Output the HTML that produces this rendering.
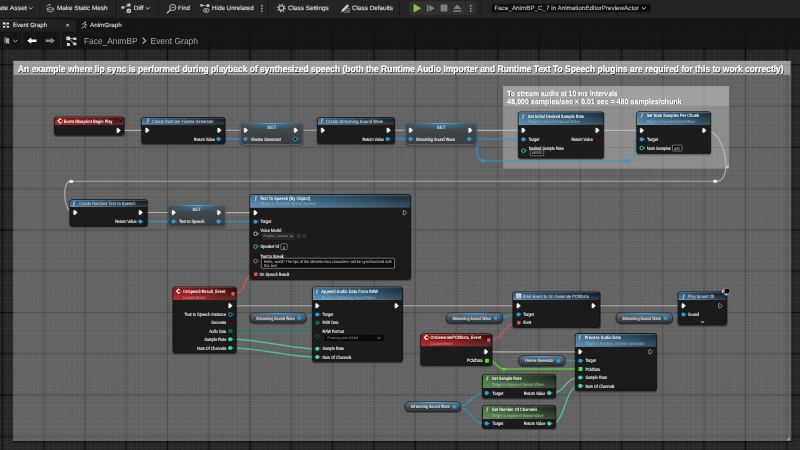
<!DOCTYPE html>
<html lang="en"><head><meta charset="utf-8"><title>Face_AnimBP - Event Graph</title>
<style>
html,body{margin:0;padding:0;background:#262626;overflow:hidden}
body{width:800px;height:450px;position:relative;font-family:"Liberation Sans",sans-serif}
svg{position:absolute;left:0;top:0;display:block;will-change:transform}
text{font-family:"Liberation Sans",sans-serif;white-space:pre}
.lb{stroke:#f2f2f2;stroke-width:0.12px}
#toolbar text,#tabs text{stroke:#d2d2d2;stroke-width:0.18px}
#toolbar text.dd{stroke-width:0.08px}
#comments text[fill="#fff"]{stroke:#fff;stroke-width:0.22px}
</style></head><body>
<svg width="800" height="450" viewBox="0 0 800 450" text-rendering="geometricPrecision">
<defs>
<pattern id="minor" x="1.9" y="23.6" width="5.16" height="5.16" patternUnits="userSpaceOnUse">
<path d="M0.5,0 V5.2 M0,0.5 H5.2" stroke="#303030" stroke-width="1" fill="none"/></pattern>
<pattern id="half" x="4.48" y="26.18" width="5.16" height="5.16" patternUnits="userSpaceOnUse">
<path d="M0.5,0 V5.2 M0,0.5 H5.2" stroke="#292929" stroke-width="1" fill="none"/></pattern>
<pattern id="major" x="1.9" y="64.4" width="165.12" height="165.12" patternUnits="userSpaceOnUse">
<path d="M0.5,0 V165.2 M41.78,0 V165.2 M124.34,0 V165.2 M0,41.78 H165.2 M0,83.06 H165.2 M0,124.34 H165.2" stroke="#0a0a0a" stroke-width="1.1" fill="none" opacity="0.95"/>
<path d="M83.06,0 V165.2 M0,0.5 H165.2" stroke="#080808" stroke-width="1.15" fill="none"/></pattern>
<linearGradient id="gblue" x1="0" x2="1" y1="0" y2="0"><stop offset="0" stop-color="#4d7fa2"/><stop offset="0.55" stop-color="#325a76"/><stop offset="1" stop-color="#1e3646"/></linearGradient>
<linearGradient id="gslate" x1="0" x2="1" y1="0" y2="0"><stop offset="0" stop-color="#3f6a8e"/><stop offset="0.5" stop-color="#2a4359"/><stop offset="1" stop-color="#171d24"/></linearGradient>
<linearGradient id="ghl" x1="0" x2="1" y1="0" y2="0"><stop offset="0" stop-color="#9cc8ee" stop-opacity="0.55"/><stop offset="0.6" stop-color="#9cc8ee" stop-opacity="0.25"/><stop offset="1" stop-color="#9cc8ee" stop-opacity="0"/></linearGradient>
<linearGradient id="gtab" x1="0" x2="1" y1="0" y2="0"><stop offset="0" stop-color="#1d4d80" stop-opacity="0.75"/><stop offset="0.5" stop-color="#1d4d80" stop-opacity="0.4"/><stop offset="1" stop-color="#1d4d80" stop-opacity="0"/></linearGradient>
<linearGradient id="gred" x1="0" x2="1" y1="0" y2="0"><stop offset="0" stop-color="#a4161a"/><stop offset="0.55" stop-color="#801416"/><stop offset="1" stop-color="#3e1010"/></linearGradient>
<linearGradient id="ggreen" x1="0" x2="1" y1="0" y2="0"><stop offset="0" stop-color="#4d7846"/><stop offset="0.55" stop-color="#375232"/><stop offset="1" stop-color="#212d1f"/></linearGradient>
<linearGradient id="gloss" x1="0" x2="0" y1="0" y2="1"><stop offset="0" stop-color="#000" stop-opacity="0.12"/><stop offset="0.3" stop-color="#000" stop-opacity="0.06"/><stop offset="0.7" stop-color="#fff" stop-opacity="0.07"/><stop offset="1" stop-color="#fff" stop-opacity="0.12"/></linearGradient>
<linearGradient id="gset" x1="0" x2="0" y1="0" y2="1"><stop offset="0" stop-color="#454c53"/><stop offset="0.5" stop-color="#3f4347"/><stop offset="1" stop-color="#393c3f"/></linearGradient>
<linearGradient id="gpill" x1="0" x2="0" y1="0" y2="1"><stop offset="0" stop-color="#6b7b87"/><stop offset="0.5" stop-color="#47525b"/><stop offset="1" stop-color="#2b3035"/></linearGradient>
<radialGradient id="gglow"><stop offset="0" stop-color="#2a9ae2" stop-opacity="0.7"/><stop offset="0.5" stop-color="#2a9ae2" stop-opacity="0.3"/><stop offset="1" stop-color="#39a8e8" stop-opacity="0"/></radialGradient>
<linearGradient id="gline" x1="0" x2="1"><stop offset="0" stop-color="#4fc0ff" stop-opacity="0"/><stop offset="0.5" stop-color="#6fd0ff" stop-opacity="0.95"/><stop offset="1" stop-color="#4fc0ff" stop-opacity="0"/></linearGradient>
</defs>

<g id="graph">
<rect x="0" y="31" width="800" height="419" fill="#202020"/>
<rect x="0" y="31" width="800" height="419" fill="url(#half)"/>
<rect x="0" y="31" width="800" height="419" fill="url(#minor)"/>
<rect x="0" y="31" width="800" height="419" fill="url(#major)"/>
<g id="comments">
<rect x="13.2" y="441" width="778.4" height="1.6" fill="#000" opacity="0.4"/><rect x="791.4" y="61.5" width="1.3" height="381" fill="#000" opacity="0.3"/>
<rect x="13.1" y="60.8" width="778.2" height="380.2" fill="#fff" opacity="0.28"/>
<rect x="13.6" y="60.9" width="776.7" height="14" fill="#fff" opacity="0.39"/>
<text x="18.65" y="72.83" font-size="9.4" fill="#000" textLength="765.60" lengthAdjust="spacingAndGlyphs" font-weight="bold" opacity="0.75">An example where lip sync is performed during playback of synthesized speech (both the Runtime Audio Importer and Runtime Text To Speech plugins are required for this to work correctly)</text>
<text x="18.00" y="72.18" font-size="9.4" fill="#fff" textLength="765.60" lengthAdjust="spacingAndGlyphs" font-weight="bold">An example where lip sync is performed during playback of synthesized speech (both the Runtime Audio Importer and Runtime Text To Speech plugins are required for this to work correctly)</text>
<rect x="503.1" y="86.1" width="226" height="82.4" fill="#fff" opacity="0.27"/>
<rect x="503.1" y="86.1" width="226" height="20.4" fill="#fff" opacity="0.17"/>
<text x="507.95" y="96.31" font-size="7.4" fill="#000" textLength="110.50" lengthAdjust="spacingAndGlyphs" font-weight="bold" opacity="0.75">To stream audio at 10 ms intervals</text>
<text x="507.30" y="95.66" font-size="7.4" fill="#fff" textLength="110.50" lengthAdjust="spacingAndGlyphs" font-weight="bold">To stream audio at 10 ms intervals</text>
<text x="507.95" y="104.21" font-size="7.4" fill="#000" textLength="174.50" lengthAdjust="spacingAndGlyphs" font-weight="bold" opacity="0.75">48,000 samples/sec × 0.01 sec = 480 samples/chunk</text>
<text x="507.30" y="103.56" font-size="7.4" fill="#fff" textLength="174.50" lengthAdjust="spacingAndGlyphs" font-weight="bold">48,000 samples/sec × 0.01 sec = 480 samples/chunk</text>
<path d="M728.6,164.5 v3.6 h-3.6 z" fill="#ddd" opacity="0.7"/>
<path d="M789.8,436.6 v3.8 h-3.8 z" fill="#ddd" opacity="0.5"/>
</g>
<g id="wires">
<path d="M121,130.4 H146" fill="none" stroke="#c2c2c2" stroke-width="1.15" stroke-linecap="round" opacity="0.8"/>
<path d="M222,130.2 H244" fill="none" stroke="#c2c2c2" stroke-width="1.15" stroke-linecap="round" opacity="0.8"/>
<path d="M221.00,139.00 C232.25,139.00 232.25,139.00 243.50,139.00" fill="none" stroke="#2b9adb" stroke-width="1.35" stroke-linecap="round" opacity="0.72"/>
<path d="M298.5,130.2 H321" fill="none" stroke="#c2c2c2" stroke-width="1.15" stroke-linecap="round" opacity="0.8"/>
<path d="M391,130.2 H409" fill="none" stroke="#c2c2c2" stroke-width="1.15" stroke-linecap="round" opacity="0.8"/>
<path d="M390.50,139.00 C399.50,139.00 399.50,139.00 408.50,139.00" fill="none" stroke="#2b9adb" stroke-width="1.35" stroke-linecap="round" opacity="0.72"/>
<path d="M473,130.3 H521.5" fill="none" stroke="#c2c2c2" stroke-width="1.15" stroke-linecap="round" opacity="0.8"/>
<path d="M472,139.1 H521.5" fill="none" stroke="#2b9adb" stroke-width="1.35" stroke-linecap="round" opacity="0.72"/>
<path d="M471.5,139.1 C482.5,139.1 471.5,160.8 483,160.8" fill="none" stroke="#2b9adb" stroke-width="1.35" stroke-linecap="round" opacity="0.72"/>
<path d="M483,160.8 H627" fill="none" stroke="#2b9adb" stroke-width="1.35" stroke-linecap="round" opacity="0.72"/>
<path d="M627.4,160.7 C641,160.7 629,139.3 640,139.3" fill="none" stroke="#2b9adb" stroke-width="1.35" stroke-linecap="round" opacity="0.72"/>
<path d="M600,130.4 H640" fill="none" stroke="#c2c2c2" stroke-width="1.15" stroke-linecap="round" opacity="0.8"/>
<path d="M707,130.6 C724,130.6 735,181.3 716,181.3" fill="none" stroke="#c2c2c2" stroke-width="1.15" stroke-linecap="round" opacity="0.8"/>
<path d="M715.2,181.2 H71.2" fill="none" stroke="#c2c2c2" stroke-width="1.15" stroke-linecap="round" opacity="0.8"/>
<path d="M70,181.4 C62,181.4 63,212.5 73.5,212.5" fill="none" stroke="#c2c2c2" stroke-width="1.15" stroke-linecap="round" opacity="0.8"/>
<path d="M143.3,212.5 H172" fill="none" stroke="#c2c2c2" stroke-width="1.15" stroke-linecap="round" opacity="0.8"/>
<path d="M142.50,221.50 C157.25,221.50 157.25,221.50 172.00,221.50" fill="none" stroke="#2b9adb" stroke-width="1.35" stroke-linecap="round" opacity="0.72"/>
<path d="M221.5,212.6 H253.5" fill="none" stroke="#c2c2c2" stroke-width="1.15" stroke-linecap="round" opacity="0.8"/>
<path d="M221.00,221.60 C237.25,221.60 237.25,221.70 253.50,221.70" fill="none" stroke="#2b9adb" stroke-width="1.35" stroke-linecap="round" opacity="0.72"/>
<path d="M235.5,293.75 C246,293.75 243,274.25 253.5,274.25" fill="none" stroke="#ea5656" stroke-width="1.2" stroke-linecap="round" opacity="0.75"/>
<path d="M233,305.75 H315.5" fill="none" stroke="#c2c2c2" stroke-width="1.15" stroke-linecap="round" opacity="0.8"/>
<path d="M301.50,318.00 C308.50,318.00 308.50,314.50 315.50,314.50" fill="none" stroke="#2b9adb" stroke-width="1.35" stroke-linecap="round" opacity="0.72"/>
<path d="M233,331 H303 C310,331 308.5,322.75 315.5,322.75" fill="none" stroke="#1f8078" stroke-width="1.5" stroke-linecap="round" opacity="0.9"/>
<path d="M233.00,339.25 C257.75,339.25 290.75,348.75 315.50,348.75" fill="none" stroke="#4ad2aa" stroke-width="1.35" stroke-linecap="round" opacity="0.82"/>
<path d="M233.00,348.00 C257.75,348.00 290.75,357.00 315.50,357.00" fill="none" stroke="#4ad2aa" stroke-width="1.35" stroke-linecap="round" opacity="0.82"/>
<path d="M399,305.75 H516.5" fill="none" stroke="#c2c2c2" stroke-width="1.15" stroke-linecap="round" opacity="0.8"/>
<path d="M497.50,318.00 C507.00,318.00 507.00,314.50 516.50,314.50" fill="none" stroke="#2b9adb" stroke-width="1.35" stroke-linecap="round" opacity="0.72"/>
<path d="M491.00,340.00 C503.75,340.00 503.75,322.75 516.50,322.75" fill="none" stroke="#ea5656" stroke-width="1.2" stroke-linecap="round" opacity="0.75"/>
<path d="M596,305.75 H681.5" fill="none" stroke="#c2c2c2" stroke-width="1.15" stroke-linecap="round" opacity="0.8"/>
<path d="M667.50,318.00 C674.50,318.00 674.50,314.50 681.50,314.50" fill="none" stroke="#2b9adb" stroke-width="1.35" stroke-linecap="round" opacity="0.72"/>
<path d="M488.5,351.8 H578.5" fill="none" stroke="#c2c2c2" stroke-width="1.15" stroke-linecap="round" opacity="0.8"/>
<path d="M560.50,360.75 C569.50,360.75 569.50,360.75 578.50,360.75" fill="none" stroke="#2b9adb" stroke-width="1.35" stroke-linecap="round" opacity="0.72"/>
<path d="M489.5,360.75 C497,360.75 496,369.1 504,369.1 H578.5" fill="none" stroke="#5cd832" stroke-width="1.5" stroke-linecap="round" opacity="0.82"/>
<path d="M456.50,406.70 C470.50,406.70 470.50,393.10 484.50,393.10" fill="none" stroke="#2b9adb" stroke-width="1.35" stroke-linecap="round" opacity="0.72"/>
<path d="M456.50,406.70 C470.50,406.70 470.50,423.50 484.50,423.50" fill="none" stroke="#2b9adb" stroke-width="1.35" stroke-linecap="round" opacity="0.72"/>
<path d="M552.00,393.10 C565.25,393.10 565.25,377.50 578.50,377.50" fill="none" stroke="#4ad2aa" stroke-width="1.35" stroke-linecap="round" opacity="0.82"/>
<path d="M552.00,423.50 C565.25,423.50 565.25,385.90 578.50,385.90" fill="none" stroke="#4ad2aa" stroke-width="1.35" stroke-linecap="round" opacity="0.82"/>
<ellipse cx="483.00" cy="160.80" rx="2.1" ry="1.7" fill="#2b9adb"/>
<ellipse cx="627.00" cy="160.80" rx="2.1" ry="1.7" fill="#2b9adb"/>
<ellipse cx="715.20" cy="181.20" rx="2.1" ry="1.7" fill="#f0f0f0"/>
<ellipse cx="71.20" cy="181.40" rx="2.1" ry="1.7" fill="#f0f0f0"/>
<ellipse cx="504.00" cy="369.10" rx="2.1" ry="1.7" fill="#5cd832"/>
</g>
<g id="nodes">
<rect x="53.40" y="116.50" width="71.60" height="20.45" rx="3.2" fill="#000" opacity="0.28"/>
<rect x="54.40" y="117.00" width="69.60" height="18.25" rx="2.4" fill="#191919" stroke="#060606" stroke-width="0.6" opacity="0.95"/>
<clipPath id="c1"><rect x="54.70" y="117.30" width="69.00" height="17.65" rx="2.2"/></clipPath>
<g clip-path="url(#c1)"><rect x="54.40" y="117.00" width="69.60" height="7.90" fill="url(#gred)"/><rect x="54.40" y="117.00" width="69.60" height="7.90" fill="url(#gloss)"/><rect x="54.40" y="117.30" width="69.60" height="0.7" fill="#fff" opacity="0.28"/></g>
<text x="64.15" y="122.99" font-size="4.7" fill="#000" textLength="48.75" lengthAdjust="spacingAndGlyphs" font-weight="bold" opacity="0.35">Event Blueprint Begin Play</text>
<text x="63.75" y="122.59" font-size="4.7" fill="#fff" textLength="48.75" lengthAdjust="spacingAndGlyphs" font-weight="bold">Event Blueprint Begin Play</text>
<path d="M60.10,118.40 l2.5,2.5 l-2.5,2.5 l-2.5,-2.5 z" fill="#f4f4f4" stroke="#f4f4f4" stroke-width="0.8" stroke-linejoin="round"/><path d="M60.30,119.60 l1.3,1.3 l-1.3,1.3 l-1.3,-1.3 z" fill="#7a1010"/><path d="M60.70,120.00 h1.6 v1.8 h-1.6 z" fill="#7a1010"/>
<rect x="118.95" y="119.25" width="3.3" height="3.3" rx="0.5" fill="#120606" stroke="#c02020" stroke-width="0.8"/>
<path d="M117.25,128.25 h1.0 l2.30,2.25 l-2.30,2.25 h-1.0 q-0.4,0 -0.4,-0.4 v-3.70 q0,-0.4 0.4,-0.4 z" fill="#f6f6f6" stroke="#f6f6f6" stroke-width="0.35" stroke-linejoin="round"/>
<rect x="140.75" y="117.00" width="85.25" height="28.45" rx="3.2" fill="#000" opacity="0.28"/>
<rect x="141.75" y="117.50" width="83.25" height="26.25" rx="2.4" fill="#191919" stroke="#060606" stroke-width="0.6" opacity="0.95"/>
<clipPath id="c2"><rect x="142.05" y="117.80" width="82.65" height="25.65" rx="2.2"/></clipPath>
<g clip-path="url(#c2)"><rect x="141.75" y="117.50" width="83.25" height="7.00" fill="url(#gslate)"/><rect x="141.75" y="117.50" width="83.25" height="7.00" fill="url(#gloss)"/><rect x="141.75" y="117.80" width="83.25" height="0.7" fill="#fff" opacity="0.28"/><rect x="141.75" y="123.80" width="83.25" height="0.7" fill="url(#ghl)"/><rect x="142.05" y="117.50" width="0.7" height="7.00" fill="#9cc8ee" opacity="0.4"/></g>
<text x="152.40" y="122.99" font-size="4.7" fill="#000" textLength="61.75" lengthAdjust="spacingAndGlyphs" font-weight="bold" opacity="0.35">Create Runtime Viseme Generator</text>
<text x="152.00" y="122.59" font-size="4.7" fill="#bccbdb" textLength="61.75" lengthAdjust="spacingAndGlyphs" font-weight="bold">Create Runtime Viseme Generator</text>
<text x="146.70" y="123.40" font-size="6.4" font-style="italic" font-weight="bold" font-family='"Liberation Serif", serif' fill="#a8ccf0">f</text>
<path d="M146.00,127.95 h1.0 l2.30,2.25 l-2.30,2.25 h-1.0 q-0.4,0 -0.4,-0.4 v-3.70 q0,-0.4 0.4,-0.4 z" fill="#f6f6f6" stroke="#f6f6f6" stroke-width="0.35" stroke-linejoin="round"/>
<path d="M218.00,127.95 h1.0 l2.30,2.25 l-2.30,2.25 h-1.0 q-0.4,0 -0.4,-0.4 v-3.70 q0,-0.4 0.4,-0.4 z" fill="#f6f6f6" stroke="#f6f6f6" stroke-width="0.35" stroke-linejoin="round"/>
<text x="193.75" y="140.69" font-size="4.7" fill="#f2f2f2" textLength="21.25" lengthAdjust="spacingAndGlyphs" class="lb">Return Value</text>
<circle cx="218.40" cy="139.00" r="2.1" fill="#2b9adb"/>
<path d="M220.70,138.00 l1.1,1 l-1.1,1 z" fill="#2b9adb"/>
<rect x="239.50" y="122.50" width="64.50" height="23.70" rx="4" fill="#000" opacity="0.28"/>
<rect x="240.50" y="123.00" width="62.50" height="21.50" rx="3.2" fill="url(#gset)" stroke="#787c80" stroke-width="0.55"/>
<clipPath id="c3"><rect x="240.80" y="123.30" width="61.90" height="20.90" rx="3"/></clipPath>
<g clip-path="url(#c3)"><ellipse cx="271.75" cy="123.00" rx="32.50" ry="7" fill="url(#gglow)"/><rect x="248.00" y="123.20" width="47.50" height="0.8" fill="url(#gline)"/></g>
<text x="271.75" y="128.86" font-size="4.6" fill="#cfd6dc" font-weight="bold" text-anchor="middle">SET</text>
<path d="M244.50,128.00 h1.0 l2.30,2.25 l-2.30,2.25 h-1.0 q-0.4,0 -0.4,-0.4 v-3.70 q0,-0.4 0.4,-0.4 z" fill="#f6f6f6" stroke="#f6f6f6" stroke-width="0.35" stroke-linejoin="round"/>
<path d="M294.50,128.00 h1.0 l2.30,2.25 l-2.30,2.25 h-1.0 q-0.4,0 -0.4,-0.4 v-3.70 q0,-0.4 0.4,-0.4 z" fill="#f6f6f6" stroke="#f6f6f6" stroke-width="0.35" stroke-linejoin="round"/>
<circle cx="245.30" cy="139.00" r="2.1" fill="#2b9adb"/>
<path d="M247.60,138.00 l1.1,1 l-1.1,1 z" fill="#2b9adb"/>
<text x="250.75" y="140.69" font-size="4.7" fill="#f2f2f2" textLength="30.25" lengthAdjust="spacingAndGlyphs" class="lb">Viseme Generator</text>
<circle cx="295.30" cy="139.00" r="1.75" fill="#0a0a0a" stroke="#2b9adb" stroke-width="1"/>
<path d="M297.60,138.00 l1.1,1 l-1.1,1 z" fill="#2b9adb"/>
<rect x="316.50" y="117.00" width="79.00" height="28.45" rx="3.2" fill="#000" opacity="0.28"/>
<rect x="317.50" y="117.50" width="77.00" height="26.25" rx="2.4" fill="#191919" stroke="#060606" stroke-width="0.6" opacity="0.95"/>
<clipPath id="c4"><rect x="317.80" y="117.80" width="76.40" height="25.65" rx="2.2"/></clipPath>
<g clip-path="url(#c4)"><rect x="317.50" y="117.50" width="77.00" height="7.00" fill="url(#gslate)"/><rect x="317.50" y="117.50" width="77.00" height="7.00" fill="url(#gloss)"/><rect x="317.50" y="117.80" width="77.00" height="0.7" fill="#fff" opacity="0.28"/><rect x="317.50" y="123.80" width="77.00" height="0.7" fill="url(#ghl)"/><rect x="317.80" y="117.50" width="0.7" height="7.00" fill="#9cc8ee" opacity="0.4"/></g>
<text x="326.65" y="122.99" font-size="4.7" fill="#000" textLength="57.00" lengthAdjust="spacingAndGlyphs" font-weight="bold" opacity="0.35">Create Streaming Sound Wave</text>
<text x="326.25" y="122.59" font-size="4.7" fill="#bccbdb" textLength="57.00" lengthAdjust="spacingAndGlyphs" font-weight="bold">Create Streaming Sound Wave</text>
<text x="320.70" y="123.40" font-size="6.4" font-style="italic" font-weight="bold" font-family='"Liberation Serif", serif' fill="#a8ccf0">f</text>
<path d="M321.50,127.95 h1.0 l2.30,2.25 l-2.30,2.25 h-1.0 q-0.4,0 -0.4,-0.4 v-3.70 q0,-0.4 0.4,-0.4 z" fill="#f6f6f6" stroke="#f6f6f6" stroke-width="0.35" stroke-linejoin="round"/>
<path d="M387.25,127.95 h1.0 l2.30,2.25 l-2.30,2.25 h-1.0 q-0.4,0 -0.4,-0.4 v-3.70 q0,-0.4 0.4,-0.4 z" fill="#f6f6f6" stroke="#f6f6f6" stroke-width="0.35" stroke-linejoin="round"/>
<text x="362.50" y="140.69" font-size="4.7" fill="#f2f2f2" textLength="21.25" lengthAdjust="spacingAndGlyphs" class="lb">Return Value</text>
<circle cx="387.60" cy="139.00" r="2.1" fill="#2b9adb"/>
<path d="M389.90,138.00 l1.1,1 l-1.1,1 z" fill="#2b9adb"/>
<rect x="404.50" y="122.50" width="73.25" height="23.70" rx="4" fill="#000" opacity="0.28"/>
<rect x="405.50" y="123.00" width="71.25" height="21.50" rx="3.2" fill="url(#gset)" stroke="#787c80" stroke-width="0.55"/>
<clipPath id="c5"><rect x="405.80" y="123.30" width="70.65" height="20.90" rx="3"/></clipPath>
<g clip-path="url(#c5)"><ellipse cx="441.12" cy="123.00" rx="37.05" ry="7" fill="url(#gglow)"/><rect x="414.05" y="123.20" width="54.15" height="0.8" fill="url(#gline)"/></g>
<text x="441.12" y="128.86" font-size="4.6" fill="#cfd6dc" font-weight="bold" text-anchor="middle">SET</text>
<path d="M409.50,128.00 h1.0 l2.30,2.25 l-2.30,2.25 h-1.0 q-0.4,0 -0.4,-0.4 v-3.70 q0,-0.4 0.4,-0.4 z" fill="#f6f6f6" stroke="#f6f6f6" stroke-width="0.35" stroke-linejoin="round"/>
<path d="M469.00,128.00 h1.0 l2.30,2.25 l-2.30,2.25 h-1.0 q-0.4,0 -0.4,-0.4 v-3.70 q0,-0.4 0.4,-0.4 z" fill="#f6f6f6" stroke="#f6f6f6" stroke-width="0.35" stroke-linejoin="round"/>
<circle cx="410.50" cy="139.00" r="2.1" fill="#2b9adb"/>
<path d="M412.80,138.00 l1.1,1 l-1.1,1 z" fill="#2b9adb"/>
<text x="416.00" y="140.69" font-size="4.7" fill="#f2f2f2" textLength="39.00" lengthAdjust="spacingAndGlyphs" class="lb">Streaming Sound Wave</text>
<circle cx="469.20" cy="139.00" r="2.1" fill="#2b9adb"/>
<path d="M471.50,138.00 l1.1,1 l-1.1,1 z" fill="#2b9adb"/>
<rect x="517.30" y="111.50" width="87.40" height="48.50" rx="3.2" fill="#000" opacity="0.28"/>
<rect x="518.30" y="112.00" width="85.40" height="46.30" rx="2.4" fill="#191919" stroke="#060606" stroke-width="0.6" opacity="0.95"/>
<clipPath id="c6"><rect x="518.60" y="112.30" width="84.80" height="45.70" rx="2.2"/></clipPath>
<g clip-path="url(#c6)"><rect x="518.30" y="112.00" width="85.40" height="12.70" fill="url(#gblue)"/><rect x="518.30" y="112.00" width="85.40" height="12.70" fill="url(#gloss)"/><rect x="518.30" y="112.30" width="85.40" height="0.7" fill="#fff" opacity="0.28"/><rect x="518.30" y="124.00" width="85.40" height="0.7" fill="url(#ghl)"/><rect x="518.60" y="112.00" width="0.7" height="12.70" fill="#9cc8ee" opacity="0.4"/></g>
<text x="528.40" y="118.09" font-size="4.7" fill="#000" textLength="56.00" lengthAdjust="spacingAndGlyphs" font-weight="bold" opacity="0.35">Set Initial Desired Sample Rate</text>
<text x="528.00" y="117.69" font-size="4.7" fill="#fff" textLength="56.00" lengthAdjust="spacingAndGlyphs" font-weight="bold">Set Initial Desired Sample Rate</text>
<text x="528.00" y="123.25" font-size="4.3" fill="#8fb6d6" textLength="52.00" lengthAdjust="spacingAndGlyphs" font-style="italic">Target is Imported Sound Wave</text>
<text x="522.00" y="118.50" font-size="6.4" font-style="italic" font-weight="bold" font-family='"Liberation Serif", serif' fill="#a8ccf0">f</text>
<path d="M522.20,128.05 h1.0 l2.30,2.25 l-2.30,2.25 h-1.0 q-0.4,0 -0.4,-0.4 v-3.70 q0,-0.4 0.4,-0.4 z" fill="#f6f6f6" stroke="#f6f6f6" stroke-width="0.35" stroke-linejoin="round"/>
<path d="M596.10,128.05 h1.0 l2.30,2.25 l-2.30,2.25 h-1.0 q-0.4,0 -0.4,-0.4 v-3.70 q0,-0.4 0.4,-0.4 z" fill="#f6f6f6" stroke="#f6f6f6" stroke-width="0.35" stroke-linejoin="round"/>
<circle cx="523.40" cy="139.30" r="2.1" fill="#2b9adb"/>
<path d="M525.70,138.30 l1.1,1 l-1.1,1 z" fill="#2b9adb"/>
<text x="528.70" y="140.99" font-size="4.7" fill="#f2f2f2" textLength="10.60" lengthAdjust="spacingAndGlyphs" class="lb">Target</text>
<text x="571.60" y="140.99" font-size="4.7" fill="#f2f2f2" textLength="21.10" lengthAdjust="spacingAndGlyphs" class="lb">Return Value</text>
<circle cx="596.70" cy="139.30" r="1.6" fill="#5a0404"/>
<path d="M598.50,138.30 l1.1,1 l-1.1,1 z" fill="#5a0404"/>
<circle cx="523.40" cy="150.60" r="1.75" fill="#0a0a0a" stroke="#4ad2aa" stroke-width="1"/>
<path d="M525.70,149.60 l1.1,1 l-1.1,1 z" fill="#4ad2aa"/>
<text x="528.70" y="149.69" font-size="4.7" fill="#f2f2f2" textLength="35.00" lengthAdjust="spacingAndGlyphs" class="lb">Desired Sample Rate</text>
<rect x="530.3" y="150.1" width="13.4" height="5.6" rx="0.6" fill="#0c0c0c" stroke="#b8b8b8" stroke-width="0.55"/>
<text x="531.80" y="154.44" font-size="4.0" fill="#c8c8c8" textLength="10.40" lengthAdjust="spacingAndGlyphs">48000</text>
<rect x="635.80" y="111.30" width="75.90" height="44.10" rx="3.2" fill="#000" opacity="0.28"/>
<rect x="636.80" y="111.80" width="73.90" height="41.90" rx="2.4" fill="#191919" stroke="#060606" stroke-width="0.6" opacity="0.95"/>
<clipPath id="c7"><rect x="637.10" y="112.10" width="73.30" height="41.30" rx="2.2"/></clipPath>
<g clip-path="url(#c7)"><rect x="636.80" y="111.80" width="73.90" height="13.10" fill="url(#gblue)"/><rect x="636.80" y="111.80" width="73.90" height="13.10" fill="url(#gloss)"/><rect x="636.80" y="112.10" width="73.90" height="0.7" fill="#fff" opacity="0.28"/><rect x="636.80" y="124.20" width="73.90" height="0.7" fill="url(#ghl)"/><rect x="637.10" y="111.80" width="0.7" height="13.10" fill="#9cc8ee" opacity="0.4"/></g>
<text x="647.10" y="117.89" font-size="4.7" fill="#000" textLength="52.50" lengthAdjust="spacingAndGlyphs" font-weight="bold" opacity="0.35">Set Num Samples Per Chunk</text>
<text x="646.70" y="117.49" font-size="4.7" fill="#fff" textLength="52.50" lengthAdjust="spacingAndGlyphs" font-weight="bold">Set Num Samples Per Chunk</text>
<text x="646.70" y="123.45" font-size="4.3" fill="#8fb6d6" textLength="48.80" lengthAdjust="spacingAndGlyphs" font-style="italic">Target is Imported Sound Wave</text>
<text x="640.70" y="118.30" font-size="6.4" font-style="italic" font-weight="bold" font-family='"Liberation Serif", serif' fill="#a8ccf0">f</text>
<path d="M640.50,128.25 h1.0 l2.30,2.25 l-2.30,2.25 h-1.0 q-0.4,0 -0.4,-0.4 v-3.70 q0,-0.4 0.4,-0.4 z" fill="#f6f6f6" stroke="#f6f6f6" stroke-width="0.35" stroke-linejoin="round"/>
<path d="M703.00,128.25 h1.0 l2.30,2.25 l-2.30,2.25 h-1.0 q-0.4,0 -0.4,-0.4 v-3.70 q0,-0.4 0.4,-0.4 z" fill="#f6f6f6" stroke="#f6f6f6" stroke-width="0.35" stroke-linejoin="round"/>
<circle cx="641.70" cy="139.30" r="2.1" fill="#2b9adb"/>
<path d="M644.00,138.30 l1.1,1 l-1.1,1 z" fill="#2b9adb"/>
<text x="647.00" y="140.99" font-size="4.7" fill="#f2f2f2" textLength="10.90" lengthAdjust="spacingAndGlyphs" class="lb">Target</text>
<circle cx="641.70" cy="148.00" r="1.75" fill="#0a0a0a" stroke="#4ad2aa" stroke-width="1"/>
<path d="M644.00,147.00 l1.1,1 l-1.1,1 z" fill="#4ad2aa"/>
<text x="647.00" y="149.69" font-size="4.7" fill="#f2f2f2" textLength="23.70" lengthAdjust="spacingAndGlyphs" class="lb">Num Samples</text>
<rect x="672.5" y="145.1" width="9.5" height="5.9" rx="0.6" fill="#0c0c0c" stroke="#b8b8b8" stroke-width="0.55"/>
<text x="674.10" y="149.64" font-size="4.0" fill="#c8c8c8" textLength="6.30" lengthAdjust="spacingAndGlyphs">480</text>
<rect x="68.90" y="199.20" width="79.30" height="28.80" rx="3.2" fill="#000" opacity="0.28"/>
<rect x="69.90" y="199.70" width="77.30" height="26.60" rx="2.4" fill="#191919" stroke="#060606" stroke-width="0.6" opacity="0.95"/>
<clipPath id="c8"><rect x="70.20" y="200.00" width="76.70" height="26.00" rx="2.2"/></clipPath>
<g clip-path="url(#c8)"><rect x="69.90" y="199.70" width="77.30" height="7.20" fill="url(#gslate)"/><rect x="69.90" y="199.70" width="77.30" height="7.20" fill="url(#gloss)"/><rect x="69.90" y="200.00" width="77.30" height="0.7" fill="#fff" opacity="0.28"/><rect x="69.90" y="206.20" width="77.30" height="0.7" fill="url(#ghl)"/><rect x="70.20" y="199.70" width="0.7" height="7.20" fill="#9cc8ee" opacity="0.4"/></g>
<text x="79.60" y="205.29" font-size="4.7" fill="#000" textLength="56.30" lengthAdjust="spacingAndGlyphs" font-weight="bold" opacity="0.35">Create Runtime Text to Speech</text>
<text x="79.20" y="204.89" font-size="4.7" fill="#bccbdb" textLength="56.30" lengthAdjust="spacingAndGlyphs" font-weight="bold">Create Runtime Text to Speech</text>
<text x="72.80" y="205.70" font-size="6.4" font-style="italic" font-weight="bold" font-family='"Liberation Serif", serif' fill="#a8ccf0">f</text>
<path d="M74.00,210.25 h1.0 l2.30,2.25 l-2.30,2.25 h-1.0 q-0.4,0 -0.4,-0.4 v-3.70 q0,-0.4 0.4,-0.4 z" fill="#f6f6f6" stroke="#f6f6f6" stroke-width="0.35" stroke-linejoin="round"/>
<path d="M139.30,210.25 h1.0 l2.30,2.25 l-2.30,2.25 h-1.0 q-0.4,0 -0.4,-0.4 v-3.70 q0,-0.4 0.4,-0.4 z" fill="#f6f6f6" stroke="#f6f6f6" stroke-width="0.35" stroke-linejoin="round"/>
<text x="115.20" y="223.19" font-size="4.7" fill="#f2f2f2" textLength="21.30" lengthAdjust="spacingAndGlyphs" class="lb">Return Value</text>
<circle cx="140.20" cy="221.50" r="2.1" fill="#2b9adb"/>
<path d="M142.50,220.50 l1.1,1 l-1.1,1 z" fill="#2b9adb"/>
<rect x="167.00" y="204.50" width="59.30" height="24.10" rx="4" fill="#000" opacity="0.28"/>
<rect x="168.00" y="205.00" width="57.30" height="21.90" rx="3.2" fill="url(#gset)" stroke="#787c80" stroke-width="0.55"/>
<clipPath id="c9"><rect x="168.30" y="205.30" width="56.70" height="21.30" rx="3"/></clipPath>
<g clip-path="url(#c9)"><ellipse cx="196.65" cy="205.00" rx="29.80" ry="7" fill="url(#gglow)"/><rect x="174.88" y="205.20" width="43.55" height="0.8" fill="url(#gline)"/></g>
<text x="196.65" y="210.86" font-size="4.6" fill="#cfd6dc" font-weight="bold" text-anchor="middle">SET</text>
<path d="M172.40,210.25 h1.0 l2.30,2.25 l-2.30,2.25 h-1.0 q-0.4,0 -0.4,-0.4 v-3.70 q0,-0.4 0.4,-0.4 z" fill="#f6f6f6" stroke="#f6f6f6" stroke-width="0.35" stroke-linejoin="round"/>
<path d="M217.70,210.25 h1.0 l2.30,2.25 l-2.30,2.25 h-1.0 q-0.4,0 -0.4,-0.4 v-3.70 q0,-0.4 0.4,-0.4 z" fill="#f6f6f6" stroke="#f6f6f6" stroke-width="0.35" stroke-linejoin="round"/>
<circle cx="173.60" cy="221.50" r="2.1" fill="#2b9adb"/>
<path d="M175.90,220.50 l1.1,1 l-1.1,1 z" fill="#2b9adb"/>
<text x="179.00" y="223.19" font-size="4.7" fill="#f2f2f2" textLength="25.50" lengthAdjust="spacingAndGlyphs" class="lb">Text to Speech</text>
<circle cx="218.40" cy="221.50" r="2.1" fill="#2b9adb"/>
<path d="M220.70,220.50 l1.1,1 l-1.1,1 z" fill="#2b9adb"/>
<rect x="249.00" y="194.00" width="162.50" height="87.20" rx="3.2" fill="#000" opacity="0.28"/>
<rect x="250.00" y="194.50" width="160.50" height="85.00" rx="2.4" fill="#191919" stroke="#060606" stroke-width="0.6" opacity="0.95"/>
<clipPath id="c10"><rect x="250.30" y="194.80" width="159.90" height="84.40" rx="2.2"/></clipPath>
<g clip-path="url(#c10)"><rect x="250.00" y="194.50" width="160.50" height="13.00" fill="url(#gblue)"/><rect x="250.00" y="194.50" width="160.50" height="13.00" fill="url(#gloss)"/><rect x="250.00" y="194.80" width="160.50" height="0.7" fill="#fff" opacity="0.28"/><rect x="250.00" y="206.80" width="160.50" height="0.7" fill="url(#ghl)"/><rect x="250.30" y="194.50" width="0.7" height="13.00" fill="#9cc8ee" opacity="0.4"/></g>
<text x="260.40" y="200.09" font-size="4.7" fill="#000" textLength="50.00" lengthAdjust="spacingAndGlyphs" font-weight="bold" opacity="0.35">Text To Speech (By Object)</text>
<text x="260.00" y="199.69" font-size="4.7" fill="#fff" textLength="50.00" lengthAdjust="spacingAndGlyphs" font-weight="bold">Text To Speech (By Object)</text>
<text x="260.00" y="205.30" font-size="4.3" fill="#8fb6d6" textLength="56.25" lengthAdjust="spacingAndGlyphs" font-style="italic">Target is Runtime Text to Speech</text>
<text x="254.45" y="200.50" font-size="6.4" font-style="italic" font-weight="bold" font-family='"Liberation Serif", serif' fill="#a8ccf0">f</text>
<path d="M254.25,210.50 h1.0 l2.30,2.25 l-2.30,2.25 h-1.0 q-0.4,0 -0.4,-0.4 v-3.70 q0,-0.4 0.4,-0.4 z" fill="#f6f6f6" stroke="#f6f6f6" stroke-width="0.35" stroke-linejoin="round"/>
<path d="M403.70,210.70 h1.0 l1.90,2.05 l-1.90,2.05 h-1.0 q-0.4,0 -0.4,-0.4 v-3.30 q0,-0.4 0.4,-0.4 z" fill="#0c0c0c" stroke="#cfcfcf" stroke-width="0.7" stroke-linejoin="round"/>
<circle cx="255.50" cy="221.75" r="2.1" fill="#2b9adb"/>
<path d="M257.80,220.75 l1.1,1 l-1.1,1 z" fill="#2b9adb"/>
<text x="260.50" y="223.44" font-size="4.7" fill="#f2f2f2" textLength="10.75" lengthAdjust="spacingAndGlyphs" class="lb">Target</text>
<text x="260.50" y="231.94" font-size="4.7" fill="#f2f2f2" textLength="20.75" lengthAdjust="spacingAndGlyphs" class="lb">Voice Model</text>
<circle cx="255.50" cy="233.75" r="1.75" fill="#0a0a0a" stroke="#7fe0d0" stroke-width="1"/>
<path d="M257.80,232.75 l1.1,1 l-1.1,1 z" fill="#7fe0d0"/>
<rect x="262.4" y="233.1" width="32.2" height="6.2" rx="1" fill="#282828" stroke="#343434" stroke-width="0.5"/>
<text x="263.60" y="237.46" font-size="3.5" fill="#a0a0a0" textLength="24.50" lengthAdjust="spacingAndGlyphs">English_Lessac</text>
<path d="M289.8,235.5 l1.5,1.5 l1.5,-1.5" fill="none" stroke="#d0d0d0" stroke-width="0.7"/>
<circle cx="298.75" cy="236" r="1.8" fill="none" stroke="#505050" stroke-width="0.7"/><path d="M297.9,236 h1.9 m-0.7,-0.8 l0.8,0.8 l-0.8,0.8" fill="none" stroke="#505050" stroke-width="0.5"/>
<circle cx="304.3" cy="235.7" r="1.5" fill="none" stroke="#505050" stroke-width="0.7"/><path d="M305.4,236.9 l1.2,1.2" stroke="#505050" stroke-width="0.7"/>
<circle cx="255.50" cy="246.50" r="1.75" fill="#0a0a0a" stroke="#4ad2aa" stroke-width="1"/>
<path d="M257.80,245.50 l1.1,1 l-1.1,1 z" fill="#4ad2aa"/>
<text x="260.50" y="248.19" font-size="4.7" fill="#f2f2f2" textLength="18.25" lengthAdjust="spacingAndGlyphs" class="lb">Speaker Id</text>
<rect x="280.8" y="243.9" width="6.2" height="5.6" rx="0.6" fill="#0c0c0c" stroke="#b8b8b8" stroke-width="0.55"/>
<text x="282.70" y="248.51" font-size="4.2" fill="#d4d4d4">0</text>
<text x="260.50" y="257.69" font-size="4.7" fill="#f2f2f2" textLength="23.25" lengthAdjust="spacingAndGlyphs" class="lb">Text to Speak</text>
<circle cx="255.50" cy="261.00" r="1.75" fill="#0a0a0a" stroke="#d84cd0" stroke-width="1"/>
<path d="M257.80,260.00 l1.1,1 l-1.1,1 z" fill="#d84cd0"/>
<rect x="261.3" y="258.2" width="133.2" height="10.1" rx="0.6" fill="#0c0c0c" stroke="#b8b8b8" stroke-width="0.55"/>
<text x="263.75" y="262.81" font-size="4.2" fill="#d4d4d4" textLength="128.20" lengthAdjust="spacingAndGlyphs">Hello, world! The lips of the MetaHuman characters will be synchronized with</text>
<text x="263.75" y="267.31" font-size="4.2" fill="#d4d4d4" textLength="13.40" lengthAdjust="spacingAndGlyphs">this text</text>
<rect x="254.10" y="272.60" width="3.3" height="3.3" rx="0.7" fill="#ea5656"/>
<text x="259.50" y="275.94" font-size="4.7" fill="#f2f2f2" textLength="29.75" lengthAdjust="spacingAndGlyphs" class="lb">On Speech Result</text>
<rect x="172.00" y="286.50" width="65.25" height="68.20" rx="3.2" fill="#000" opacity="0.28"/>
<rect x="173.00" y="287.00" width="63.25" height="66.00" rx="2.4" fill="#191919" stroke="#060606" stroke-width="0.6" opacity="0.95"/>
<clipPath id="c11"><rect x="173.30" y="287.30" width="62.65" height="65.40" rx="2.2"/></clipPath>
<g clip-path="url(#c11)"><rect x="173.00" y="287.00" width="63.25" height="13.00" fill="url(#gred)"/><rect x="173.00" y="287.00" width="63.25" height="13.00" fill="url(#gloss)"/><rect x="173.00" y="287.30" width="63.25" height="0.7" fill="#fff" opacity="0.28"/></g>
<text x="183.40" y="293.34" font-size="4.7" fill="#000" textLength="42.50" lengthAdjust="spacingAndGlyphs" font-weight="bold" opacity="0.35">OnSpeechResult_Event</text>
<text x="183.00" y="292.94" font-size="4.7" fill="#fff" textLength="42.50" lengthAdjust="spacingAndGlyphs" font-weight="bold">OnSpeechResult_Event</text>
<text x="183.00" y="298.55" font-size="4.3" fill="#d99a9a" textLength="22.50" lengthAdjust="spacingAndGlyphs" font-style="italic">Custom Event</text>
<path d="M178.70,288.75 l2.5,2.5 l-2.5,2.5 l-2.5,-2.5 z" fill="#f4f4f4" stroke="#f4f4f4" stroke-width="0.8" stroke-linejoin="round"/><path d="M178.90,289.95 l1.3,1.3 l-1.3,1.3 l-1.3,-1.3 z" fill="#7a1010"/><path d="M179.30,290.35 h1.6 v1.8 h-1.6 z" fill="#7a1010"/>
<rect x="231.35" y="292.10" width="3.3" height="3.3" rx="0.7" fill="#ea5656"/>
<path d="M229.00,303.50 h1.0 l2.30,2.25 l-2.30,2.25 h-1.0 q-0.4,0 -0.4,-0.4 v-3.70 q0,-0.4 0.4,-0.4 z" fill="#f6f6f6" stroke="#f6f6f6" stroke-width="0.35" stroke-linejoin="round"/>
<text x="184.50" y="316.19" font-size="4.7" fill="#f2f2f2" textLength="41.75" lengthAdjust="spacingAndGlyphs" class="lb">Text to Speech Instance</text>
<circle cx="230.20" cy="314.50" r="1.75" fill="#0a0a0a" stroke="#2b9adb" stroke-width="1"/>
<path d="M232.50,313.50 l1.1,1 l-1.1,1 z" fill="#2b9adb"/>
<text x="211.25" y="324.44" font-size="4.7" fill="#f2f2f2" textLength="15.00" lengthAdjust="spacingAndGlyphs" class="lb">Success</text>
<circle cx="230.20" cy="322.75" r="1.6" fill="#5a0404"/>
<path d="M232.00,321.75 l1.1,1 l-1.1,1 z" fill="#5a0404"/>
<text x="209.25" y="332.69" font-size="4.7" fill="#f2f2f2" textLength="17.00" lengthAdjust="spacingAndGlyphs" class="lb">Audio Data</text>
<rect x="228.50" y="329.00" width="4.0" height="4.0" rx="0.7" fill="#1c5e54"/>
<text x="204.50" y="340.94" font-size="4.7" fill="#f2f2f2" textLength="21.75" lengthAdjust="spacingAndGlyphs" class="lb">Sample Rate</text>
<circle cx="230.20" cy="339.25" r="2.1" fill="#4ad2aa"/>
<path d="M232.50,338.25 l1.1,1 l-1.1,1 z" fill="#4ad2aa"/>
<text x="197.00" y="349.69" font-size="4.7" fill="#f2f2f2" textLength="29.25" lengthAdjust="spacingAndGlyphs" class="lb">Num Of Channels</text>
<circle cx="230.20" cy="348.00" r="2.1" fill="#4ad2aa"/>
<path d="M232.50,347.00 l1.1,1 l-1.1,1 z" fill="#4ad2aa"/>
<rect x="249.20" y="312.70" width="57.85" height="11.80" rx="5" fill="#000" opacity="0.3"/>
<rect x="250.00" y="313.00" width="56.25" height="10.00" rx="4.2" fill="url(#gpill)" stroke="#14181c" stroke-width="0.6"/>
<clipPath id="c12"><rect x="250.30" y="313.30" width="55.65" height="9.40" rx="4"/></clipPath>
<g clip-path="url(#c12)"><ellipse cx="278.12" cy="313.00" rx="28.12" ry="4.2" fill="url(#gglow)" opacity="0.75"/><rect x="255.62" y="313.20" width="45.00" height="0.8" fill="url(#gline)" opacity="0.8"/></g>
<text x="256.65" y="320.06" font-size="4.6" fill="#000" textLength="38.75" lengthAdjust="spacingAndGlyphs" font-weight="bold" opacity="0.35">Streaming Sound Wave</text>
<text x="256.25" y="319.66" font-size="4.6" fill="#e8e8e8" textLength="38.75" lengthAdjust="spacingAndGlyphs" font-weight="bold">Streaming Sound Wave</text>
<circle cx="299.25" cy="318.00" r="2.1" fill="#2b9adb"/>
<path d="M301.55,317.00 l1.1,1 l-1.1,1 z" fill="#2b9adb"/>
<rect x="311.50" y="286.50" width="92.00" height="76.95" rx="3.2" fill="#000" opacity="0.28"/>
<rect x="312.50" y="287.00" width="90.00" height="74.75" rx="2.4" fill="#191919" stroke="#060606" stroke-width="0.6" opacity="0.95"/>
<clipPath id="c13"><rect x="312.80" y="287.30" width="89.40" height="74.15" rx="2.2"/></clipPath>
<g clip-path="url(#c13)"><rect x="312.50" y="287.00" width="90.00" height="13.00" fill="url(#gblue)"/><rect x="312.50" y="287.00" width="90.00" height="13.00" fill="url(#gloss)"/><rect x="312.50" y="287.30" width="90.00" height="0.7" fill="#fff" opacity="0.28"/><rect x="312.50" y="299.30" width="90.00" height="0.7" fill="url(#ghl)"/><rect x="312.80" y="287.00" width="0.7" height="13.00" fill="#9cc8ee" opacity="0.4"/></g>
<text x="321.65" y="293.34" font-size="4.7" fill="#000" textLength="56.75" lengthAdjust="spacingAndGlyphs" font-weight="bold" opacity="0.35">Append Audio Data From RAW</text>
<text x="321.25" y="292.94" font-size="4.7" fill="#fff" textLength="56.75" lengthAdjust="spacingAndGlyphs" font-weight="bold">Append Audio Data From RAW</text>
<text x="321.25" y="298.55" font-size="4.3" fill="#8fb6d6" textLength="54.25" lengthAdjust="spacingAndGlyphs" font-style="italic">Target is Streaming Sound Wave</text>
<text x="315.70" y="293.75" font-size="6.4" font-style="italic" font-weight="bold" font-family='"Liberation Serif", serif' fill="#a8ccf0">f</text>
<path d="M316.00,303.50 h1.0 l2.30,2.25 l-2.30,2.25 h-1.0 q-0.4,0 -0.4,-0.4 v-3.70 q0,-0.4 0.4,-0.4 z" fill="#f6f6f6" stroke="#f6f6f6" stroke-width="0.35" stroke-linejoin="round"/>
<path d="M395.25,303.50 h1.0 l2.30,2.25 l-2.30,2.25 h-1.0 q-0.4,0 -0.4,-0.4 v-3.70 q0,-0.4 0.4,-0.4 z" fill="#f6f6f6" stroke="#f6f6f6" stroke-width="0.35" stroke-linejoin="round"/>
<circle cx="317.20" cy="314.50" r="2.1" fill="#2b9adb"/>
<path d="M319.50,313.50 l1.1,1 l-1.1,1 z" fill="#2b9adb"/>
<text x="322.50" y="316.19" font-size="4.7" fill="#f2f2f2" textLength="10.50" lengthAdjust="spacingAndGlyphs" class="lb">Target</text>
<rect x="315.50" y="320.75" width="4.0" height="4.0" rx="0.7" fill="#1c5e54"/>
<text x="322.50" y="324.44" font-size="4.7" fill="#f2f2f2" textLength="15.75" lengthAdjust="spacingAndGlyphs" class="lb">RAW Data</text>
<text x="322.50" y="332.69" font-size="4.7" fill="#f2f2f2" textLength="21.25" lengthAdjust="spacingAndGlyphs" class="lb">RAW Format</text>
<circle cx="317.20" cy="336.25" r="1.75" fill="#0a0a0a" stroke="#1c5e54" stroke-width="1"/>
<path d="M319.50,335.25 l1.1,1 l-1.1,1 z" fill="#1c5e54"/>
<rect x="323.75" y="334.3" width="61.25" height="7.4" rx="1" fill="#0a0a0a" stroke="#2e2e2e" stroke-width="0.5"/>
<text x="327.50" y="339.26" font-size="3.5" fill="#a0a0a0" textLength="30.50" lengthAdjust="spacingAndGlyphs">Floating point 32-bit</text>
<path d="M377.3,337.3 l1.5,1.5 l1.5,-1.5" fill="none" stroke="#c8c8c8" stroke-width="0.65"/>
<circle cx="317.20" cy="348.75" r="2.1" fill="#4ad2aa"/>
<path d="M319.50,347.75 l1.1,1 l-1.1,1 z" fill="#4ad2aa"/>
<text x="322.50" y="350.44" font-size="4.7" fill="#f2f2f2" textLength="21.25" lengthAdjust="spacingAndGlyphs" class="lb">Sample Rate</text>
<circle cx="317.20" cy="357.00" r="2.1" fill="#4ad2aa"/>
<path d="M319.50,356.00 l1.1,1 l-1.1,1 z" fill="#4ad2aa"/>
<text x="322.50" y="358.69" font-size="4.7" fill="#f2f2f2" textLength="28.75" lengthAdjust="spacingAndGlyphs" class="lb">Num Of Channels</text>
<rect x="445.45" y="312.70" width="57.85" height="12.05" rx="5" fill="#000" opacity="0.3"/>
<rect x="446.25" y="313.00" width="56.25" height="10.25" rx="4.2" fill="url(#gpill)" stroke="#14181c" stroke-width="0.6"/>
<clipPath id="c14"><rect x="446.55" y="313.30" width="55.65" height="9.65" rx="4"/></clipPath>
<g clip-path="url(#c14)"><ellipse cx="474.38" cy="313.00" rx="28.12" ry="4.2" fill="url(#gglow)" opacity="0.75"/><rect x="451.88" y="313.20" width="45.00" height="0.8" fill="url(#gline)" opacity="0.8"/></g>
<text x="452.90" y="320.18" font-size="4.6" fill="#000" textLength="38.75" lengthAdjust="spacingAndGlyphs" font-weight="bold" opacity="0.35">Streaming Sound Wave</text>
<text x="452.50" y="319.78" font-size="4.6" fill="#e8e8e8" textLength="38.75" lengthAdjust="spacingAndGlyphs" font-weight="bold">Streaming Sound Wave</text>
<circle cx="495.50" cy="318.12" r="2.1" fill="#2b9adb"/>
<path d="M497.80,317.12 l1.1,1 l-1.1,1 z" fill="#2b9adb"/>
<rect x="419.75" y="333.25" width="73.25" height="33.95" rx="3.2" fill="#000" opacity="0.28"/>
<rect x="420.75" y="333.75" width="71.25" height="31.75" rx="2.4" fill="#191919" stroke="#060606" stroke-width="0.6" opacity="0.95"/>
<clipPath id="c15"><rect x="421.05" y="334.05" width="70.65" height="31.15" rx="2.2"/></clipPath>
<g clip-path="url(#c15)"><rect x="420.75" y="333.75" width="71.25" height="12.50" fill="url(#gred)"/><rect x="420.75" y="333.75" width="71.25" height="12.50" fill="url(#gloss)"/><rect x="420.75" y="334.05" width="71.25" height="0.7" fill="#fff" opacity="0.28"/></g>
<text x="430.90" y="339.59" font-size="4.7" fill="#000" textLength="50.75" lengthAdjust="spacingAndGlyphs" font-weight="bold" opacity="0.35">OnGeneratePCMData_Event</text>
<text x="430.50" y="339.19" font-size="4.7" fill="#fff" textLength="50.75" lengthAdjust="spacingAndGlyphs" font-weight="bold">OnGeneratePCMData_Event</text>
<text x="430.50" y="344.95" font-size="4.3" fill="#d99a9a" textLength="22.00" lengthAdjust="spacingAndGlyphs" font-style="italic">Custom Event</text>
<path d="M426.45,335.00 l2.5,2.5 l-2.5,2.5 l-2.5,-2.5 z" fill="#f4f4f4" stroke="#f4f4f4" stroke-width="0.8" stroke-linejoin="round"/><path d="M426.65,336.20 l1.3,1.3 l-1.3,1.3 l-1.3,-1.3 z" fill="#7a1010"/><path d="M427.05,336.60 h1.6 v1.8 h-1.6 z" fill="#7a1010"/>
<rect x="487.10" y="338.35" width="3.3" height="3.3" rx="0.7" fill="#ea5656"/>
<path d="M484.75,349.50 h1.0 l2.30,2.25 l-2.30,2.25 h-1.0 q-0.4,0 -0.4,-0.4 v-3.70 q0,-0.4 0.4,-0.4 z" fill="#f6f6f6" stroke="#f6f6f6" stroke-width="0.35" stroke-linejoin="round"/>
<text x="467.00" y="362.44" font-size="4.7" fill="#f2f2f2" textLength="15.50" lengthAdjust="spacingAndGlyphs" class="lb">PCMData</text>
<rect x="485.00" y="358.75" width="4.0" height="4.0" rx="0.7" fill="#5cd832"/>
<rect x="512.00" y="291.50" width="89.00" height="37.70" rx="3.2" fill="#000" opacity="0.28"/>
<rect x="513.00" y="292.00" width="87.00" height="35.50" rx="2.4" fill="#191919" stroke="#060606" stroke-width="0.6" opacity="0.95"/>
<clipPath id="c16"><rect x="513.30" y="292.30" width="86.40" height="34.90" rx="2.2"/></clipPath>
<g clip-path="url(#c16)"><rect x="513.00" y="292.00" width="87.00" height="7.80" fill="url(#gslate)"/><rect x="513.00" y="292.00" width="87.00" height="7.80" fill="url(#gloss)"/><rect x="513.00" y="292.30" width="87.00" height="0.7" fill="#fff" opacity="0.28"/><rect x="513.00" y="299.10" width="87.00" height="0.7" fill="url(#ghl)"/><rect x="513.30" y="292.00" width="0.7" height="7.80" fill="#9cc8ee" opacity="0.4"/></g>
<text x="523.40" y="298.09" font-size="4.7" fill="#000" textLength="65.75" lengthAdjust="spacingAndGlyphs" font-weight="bold" opacity="0.35">Bind Event to On Generate PCMData</text>
<text x="523.00" y="297.69" font-size="4.7" fill="#bccbdb" textLength="65.75" lengthAdjust="spacingAndGlyphs" font-weight="bold">Bind Event to On Generate PCMData</text>
<rect x="516.00" y="293.80" width="5.4" height="4.6" rx="0.5" fill="#b9c0cc"/><rect x="516.00" y="293.80" width="5.4" height="1.2" rx="0.5" fill="#e4e8ee"/>
<path d="M517.25,303.50 h1.0 l2.30,2.25 l-2.30,2.25 h-1.0 q-0.4,0 -0.4,-0.4 v-3.70 q0,-0.4 0.4,-0.4 z" fill="#f6f6f6" stroke="#f6f6f6" stroke-width="0.35" stroke-linejoin="round"/>
<path d="M592.25,303.50 h1.0 l2.30,2.25 l-2.30,2.25 h-1.0 q-0.4,0 -0.4,-0.4 v-3.70 q0,-0.4 0.4,-0.4 z" fill="#f6f6f6" stroke="#f6f6f6" stroke-width="0.35" stroke-linejoin="round"/>
<circle cx="518.50" cy="314.50" r="2.1" fill="#2b9adb"/>
<path d="M520.80,313.50 l1.1,1 l-1.1,1 z" fill="#2b9adb"/>
<text x="523.25" y="316.19" font-size="4.7" fill="#f2f2f2" textLength="10.50" lengthAdjust="spacingAndGlyphs" class="lb">Target</text>
<rect x="517.10" y="321.10" width="3.3" height="3.3" rx="0.7" fill="#ea5656"/>
<text x="523.25" y="324.44" font-size="4.7" fill="#f2f2f2" textLength="8.00" lengthAdjust="spacingAndGlyphs" class="lb">Event</text>
<rect x="517.95" y="355.45" width="47.85" height="11.80" rx="5" fill="#000" opacity="0.3"/>
<rect x="518.75" y="355.75" width="46.25" height="10.00" rx="4.2" fill="url(#gpill)" stroke="#14181c" stroke-width="0.6"/>
<clipPath id="c17"><rect x="519.05" y="356.05" width="45.65" height="9.40" rx="4"/></clipPath>
<g clip-path="url(#c17)"><ellipse cx="541.88" cy="355.75" rx="23.12" ry="4.2" fill="url(#gglow)" opacity="0.75"/><rect x="523.38" y="355.95" width="37.00" height="0.8" fill="url(#gline)" opacity="0.8"/></g>
<text x="524.90" y="362.81" font-size="4.6" fill="#000" textLength="29.25" lengthAdjust="spacingAndGlyphs" font-weight="bold" opacity="0.35">Viseme Generator</text>
<text x="524.50" y="362.41" font-size="4.6" fill="#e8e8e8" textLength="29.25" lengthAdjust="spacingAndGlyphs" font-weight="bold">Viseme Generator</text>
<circle cx="558.25" cy="360.75" r="2.1" fill="#2b9adb"/>
<path d="M560.55,359.75 l1.1,1 l-1.1,1 z" fill="#2b9adb"/>
<rect x="574.30" y="333.10" width="83.20" height="59.40" rx="3.2" fill="#000" opacity="0.28"/>
<rect x="575.30" y="333.60" width="81.20" height="57.20" rx="2.4" fill="#191919" stroke="#060606" stroke-width="0.6" opacity="0.95"/>
<clipPath id="c18"><rect x="575.60" y="333.90" width="80.60" height="56.60" rx="2.2"/></clipPath>
<g clip-path="url(#c18)"><rect x="575.30" y="333.60" width="81.20" height="13.00" fill="url(#gblue)"/><rect x="575.30" y="333.60" width="81.20" height="13.00" fill="url(#gloss)"/><rect x="575.30" y="333.90" width="81.20" height="0.7" fill="#fff" opacity="0.28"/><rect x="575.30" y="345.90" width="81.20" height="0.7" fill="url(#ghl)"/><rect x="575.60" y="333.60" width="0.7" height="13.00" fill="#9cc8ee" opacity="0.4"/></g>
<text x="585.20" y="339.39" font-size="4.7" fill="#000" textLength="36.10" lengthAdjust="spacingAndGlyphs" font-weight="bold" opacity="0.35">Process Audio Data</text>
<text x="584.80" y="338.99" font-size="4.7" fill="#fff" textLength="36.10" lengthAdjust="spacingAndGlyphs" font-weight="bold">Process Audio Data</text>
<text x="584.80" y="344.95" font-size="4.3" fill="#8fb6d6" textLength="59.80" lengthAdjust="spacingAndGlyphs" font-style="italic">Target is Runtime Viseme Generator</text>
<text x="578.60" y="339.80" font-size="6.4" font-style="italic" font-weight="bold" font-family='"Liberation Serif", serif' fill="#a8ccf0">f</text>
<path d="M579.00,349.55 h1.0 l2.30,2.25 l-2.30,2.25 h-1.0 q-0.4,0 -0.4,-0.4 v-3.70 q0,-0.4 0.4,-0.4 z" fill="#f6f6f6" stroke="#f6f6f6" stroke-width="0.35" stroke-linejoin="round"/>
<path d="M649.40,349.75 h1.0 l1.90,2.05 l-1.90,2.05 h-1.0 q-0.4,0 -0.4,-0.4 v-3.30 q0,-0.4 0.4,-0.4 z" fill="#0c0c0c" stroke="#cfcfcf" stroke-width="0.7" stroke-linejoin="round"/>
<circle cx="580.20" cy="360.75" r="2.1" fill="#2b9adb"/>
<path d="M582.50,359.75 l1.1,1 l-1.1,1 z" fill="#2b9adb"/>
<text x="585.40" y="362.44" font-size="4.7" fill="#f2f2f2" textLength="10.40" lengthAdjust="spacingAndGlyphs" class="lb">Target</text>
<rect x="578.50" y="367.10" width="4.0" height="4.0" rx="0.7" fill="#5cd832"/>
<text x="585.40" y="370.79" font-size="4.7" fill="#f2f2f2" textLength="14.70" lengthAdjust="spacingAndGlyphs" class="lb">PCMData</text>
<circle cx="580.20" cy="377.50" r="2.1" fill="#4ad2aa"/>
<path d="M582.50,376.50 l1.1,1 l-1.1,1 z" fill="#4ad2aa"/>
<text x="585.40" y="379.19" font-size="4.7" fill="#f2f2f2" textLength="21.60" lengthAdjust="spacingAndGlyphs" class="lb">Sample Rate</text>
<circle cx="580.20" cy="385.90" r="2.1" fill="#4ad2aa"/>
<path d="M582.50,384.90 l1.1,1 l-1.1,1 z" fill="#4ad2aa"/>
<text x="585.40" y="387.59" font-size="4.7" fill="#f2f2f2" textLength="28.90" lengthAdjust="spacingAndGlyphs" class="lb">Num Of Channels</text>
<rect x="481.50" y="373.80" width="75.10" height="25.90" rx="3.2" fill="#000" opacity="0.28"/>
<rect x="482.50" y="374.30" width="73.10" height="23.70" rx="2.4" fill="#191919" stroke="#060606" stroke-width="0.6" opacity="0.95"/>
<clipPath id="c19"><rect x="482.80" y="374.60" width="72.50" height="23.10" rx="2.2"/></clipPath>
<g clip-path="url(#c19)"><rect x="482.50" y="374.30" width="73.10" height="13.70" fill="url(#ggreen)"/><rect x="482.50" y="374.30" width="73.10" height="13.70" fill="url(#gloss)"/><rect x="482.50" y="374.60" width="73.10" height="0.7" fill="#fff" opacity="0.28"/></g>
<text x="492.10" y="380.79" font-size="4.7" fill="#000" textLength="29.80" lengthAdjust="spacingAndGlyphs" font-weight="bold" opacity="0.35">Get Sample Rate</text>
<text x="491.70" y="380.39" font-size="4.7" fill="#fff" textLength="29.80" lengthAdjust="spacingAndGlyphs" font-weight="bold">Get Sample Rate</text>
<text x="491.70" y="386.25" font-size="4.3" fill="#9cc79c" textLength="52.10" lengthAdjust="spacingAndGlyphs" font-style="italic">Target is Imported Sound Wave</text>
<text x="486.10" y="381.20" font-size="6.4" font-style="italic" font-weight="bold" font-family='"Liberation Serif", serif' fill="#b4e0a8">f</text>
<circle cx="486.60" cy="393.10" r="2.1" fill="#2b9adb"/>
<path d="M488.90,392.10 l1.1,1 l-1.1,1 z" fill="#2b9adb"/>
<text x="492.60" y="394.79" font-size="4.7" fill="#f2f2f2" textLength="10.70" lengthAdjust="spacingAndGlyphs" class="lb">Target</text>
<text x="523.80" y="394.79" font-size="4.7" fill="#f2f2f2" textLength="21.40" lengthAdjust="spacingAndGlyphs" class="lb">Return Value</text>
<circle cx="549.20" cy="393.10" r="2.1" fill="#4ad2aa"/>
<path d="M551.50,392.10 l1.1,1 l-1.1,1 z" fill="#4ad2aa"/>
<rect x="481.50" y="404.80" width="75.10" height="25.30" rx="3.2" fill="#000" opacity="0.28"/>
<rect x="482.50" y="405.30" width="73.10" height="23.10" rx="2.4" fill="#191919" stroke="#060606" stroke-width="0.6" opacity="0.95"/>
<clipPath id="c20"><rect x="482.80" y="405.60" width="72.50" height="22.50" rx="2.2"/></clipPath>
<g clip-path="url(#c20)"><rect x="482.50" y="405.30" width="73.10" height="13.70" fill="url(#ggreen)"/><rect x="482.50" y="405.30" width="73.10" height="13.70" fill="url(#gloss)"/><rect x="482.50" y="405.60" width="73.10" height="0.7" fill="#fff" opacity="0.28"/></g>
<text x="492.10" y="411.39" font-size="4.7" fill="#000" textLength="45.70" lengthAdjust="spacingAndGlyphs" font-weight="bold" opacity="0.35">Get Number Of Channels</text>
<text x="491.70" y="410.99" font-size="4.7" fill="#fff" textLength="45.70" lengthAdjust="spacingAndGlyphs" font-weight="bold">Get Number Of Channels</text>
<text x="491.70" y="416.95" font-size="4.3" fill="#9cc79c" textLength="52.10" lengthAdjust="spacingAndGlyphs" font-style="italic">Target is Imported Sound Wave</text>
<text x="486.10" y="411.80" font-size="6.4" font-style="italic" font-weight="bold" font-family='"Liberation Serif", serif' fill="#b4e0a8">f</text>
<circle cx="486.60" cy="423.50" r="2.1" fill="#2b9adb"/>
<path d="M488.90,422.50 l1.1,1 l-1.1,1 z" fill="#2b9adb"/>
<text x="492.60" y="425.19" font-size="4.7" fill="#f2f2f2" textLength="10.70" lengthAdjust="spacingAndGlyphs" class="lb">Target</text>
<text x="523.80" y="425.19" font-size="4.7" fill="#f2f2f2" textLength="21.40" lengthAdjust="spacingAndGlyphs" class="lb">Return Value</text>
<circle cx="549.20" cy="423.50" r="2.1" fill="#4ad2aa"/>
<path d="M551.50,422.50 l1.1,1 l-1.1,1 z" fill="#4ad2aa"/>
<rect x="404.20" y="401.50" width="57.40" height="11.60" rx="5" fill="#000" opacity="0.3"/>
<rect x="405.00" y="401.80" width="55.80" height="9.80" rx="4.2" fill="url(#gpill)" stroke="#14181c" stroke-width="0.6"/>
<clipPath id="c21"><rect x="405.30" y="402.10" width="55.20" height="9.20" rx="4"/></clipPath>
<g clip-path="url(#c21)"><ellipse cx="432.90" cy="401.80" rx="27.90" ry="4.2" fill="url(#gglow)" opacity="0.75"/><rect x="410.58" y="402.00" width="44.64" height="0.8" fill="url(#gline)" opacity="0.8"/></g>
<text x="411.20" y="408.76" font-size="4.6" fill="#000" textLength="39.00" lengthAdjust="spacingAndGlyphs" font-weight="bold" opacity="0.35">Streaming Sound Wave</text>
<text x="410.80" y="408.36" font-size="4.6" fill="#e8e8e8" textLength="39.00" lengthAdjust="spacingAndGlyphs" font-weight="bold">Streaming Sound Wave</text>
<circle cx="454.20" cy="406.70" r="2.1" fill="#2b9adb"/>
<path d="M456.50,405.70 l1.1,1 l-1.1,1 z" fill="#2b9adb"/>
<rect x="615.45" y="312.70" width="57.85" height="12.05" rx="5" fill="#000" opacity="0.3"/>
<rect x="616.25" y="313.00" width="56.25" height="10.25" rx="4.2" fill="url(#gpill)" stroke="#14181c" stroke-width="0.6"/>
<clipPath id="c22"><rect x="616.55" y="313.30" width="55.65" height="9.65" rx="4"/></clipPath>
<g clip-path="url(#c22)"><ellipse cx="644.38" cy="313.00" rx="28.12" ry="4.2" fill="url(#gglow)" opacity="0.75"/><rect x="621.88" y="313.20" width="45.00" height="0.8" fill="url(#gline)" opacity="0.8"/></g>
<text x="622.90" y="320.18" font-size="4.6" fill="#000" textLength="38.75" lengthAdjust="spacingAndGlyphs" font-weight="bold" opacity="0.35">Streaming Sound Wave</text>
<text x="622.50" y="319.78" font-size="4.6" fill="#e8e8e8" textLength="38.75" lengthAdjust="spacingAndGlyphs" font-weight="bold">Streaming Sound Wave</text>
<circle cx="665.50" cy="318.12" r="2.1" fill="#2b9adb"/>
<path d="M667.80,317.12 l1.1,1 l-1.1,1 z" fill="#2b9adb"/>
<rect x="677.25" y="291.50" width="50.50" height="35.20" rx="3.2" fill="#000" opacity="0.28"/>
<rect x="678.25" y="292.00" width="48.50" height="33.00" rx="2.4" fill="#191919" stroke="#060606" stroke-width="0.6" opacity="0.95"/>
<clipPath id="c23"><rect x="678.55" y="292.30" width="47.90" height="32.40" rx="2.2"/></clipPath>
<g clip-path="url(#c23)"><rect x="678.25" y="292.00" width="48.50" height="8.00" fill="url(#gslate)"/><rect x="678.25" y="292.00" width="48.50" height="8.00" fill="url(#gloss)"/><rect x="678.25" y="292.30" width="48.50" height="0.7" fill="#fff" opacity="0.28"/><rect x="678.25" y="299.30" width="48.50" height="0.7" fill="url(#ghl)"/><rect x="678.55" y="292.00" width="0.7" height="8.00" fill="#9cc8ee" opacity="0.4"/></g>
<text x="688.40" y="298.09" font-size="4.7" fill="#000" textLength="26.50" lengthAdjust="spacingAndGlyphs" font-weight="bold" opacity="0.35">Play Sound 2D</text>
<text x="688.00" y="297.69" font-size="4.7" fill="#bccbdb" textLength="26.50" lengthAdjust="spacingAndGlyphs" font-weight="bold">Play Sound 2D</text>
<text x="682.45" y="298.50" font-size="6.4" font-style="italic" font-weight="bold" font-family='"Liberation Serif", serif' fill="#a8ccf0">f</text>
<path d="M682.25,303.50 h1.0 l2.30,2.25 l-2.30,2.25 h-1.0 q-0.4,0 -0.4,-0.4 v-3.70 q0,-0.4 0.4,-0.4 z" fill="#f6f6f6" stroke="#f6f6f6" stroke-width="0.35" stroke-linejoin="round"/>
<path d="M719.20,303.70 h1.0 l1.90,2.05 l-1.90,2.05 h-1.0 q-0.4,0 -0.4,-0.4 v-3.30 q0,-0.4 0.4,-0.4 z" fill="#0c0c0c" stroke="#cfcfcf" stroke-width="0.7" stroke-linejoin="round"/>
<circle cx="683.50" cy="314.50" r="2.1" fill="#2b9adb"/>
<path d="M685.80,313.50 l1.1,1 l-1.1,1 z" fill="#2b9adb"/>
<text x="688.00" y="316.19" font-size="4.7" fill="#f2f2f2" textLength="11.25" lengthAdjust="spacingAndGlyphs" class="lb">Sound</text>
<path d="M700.9,321.2 l1.6,1.5 l1.6,-1.5" fill="none" stroke="#f0f0f0" stroke-width="1"/>
<circle cx="726.1" cy="291.4" r="3.6" fill="#8c8c8c" opacity="0.55"/><circle cx="727" cy="291" r="2.3" fill="#050505"/><path d="M722.3,289.8 q-0.6,1.6 0,3.2 l1.1,-0.3 v-2.6 z" fill="#eee"/><path d="M724.6,295.3 l1.6,-1.7 l1.5,1.7 z" fill="#f4f4f4"/>
</g>
</g>
<g id="crumbs">
<rect x="0" y="31.5" width="800" height="18.2" fill="#111" opacity="0.78"/>
<rect x="21.6" y="32" width="0.8" height="17.5" fill="#2a2a2a"/><rect x="60.3" y="32" width="0.8" height="17.5" fill="#2a2a2a"/>
<path d="M4.1,37.2 h2.9 v5.9 l-1.45,-1.2 l-1.45,1.2 z" fill="#6e6e6e"/><path d="M5.7,38.1 h3.6 v6.3 l-1.8,-1.5 l-1.8,1.5 z" fill="#b4b4b4" stroke="#1a1a1a" stroke-width="0.4"/>
<path d="M13.3,40 l2,1.9 l2,-1.9" fill="none" stroke="#bdbdbd" stroke-width="0.95"/>
<path d="M27.2,40.7 l4.1,-3.1 v1.9 h5.2 v2.4 h-5.2 v1.9 z" fill="#f4f4f4"/>
<path d="M54.9,40.7 l-4.1,-3.1 v1.9 h-5.2 v2.4 h5.2 v1.9 z" fill="#878787"/>
<g fill="#d0d0d0"><rect x="66.3" y="36.5" width="3.8" height="3.7" rx="0.5"/><rect x="73.2" y="37.4" width="3.2" height="2.6" rx="0.5"/><rect x="66.9" y="43.1" width="3.1" height="2.8" rx="0.5"/><rect x="73.2" y="42.6" width="3.2" height="2.7" rx="0.5"/></g><path d="M70,38.6 H73.4 M69.8,39.4 L73.6,43.4" stroke="#d0d0d0" stroke-width="0.8" fill="none"/>
<text x="84.00" y="43.87" font-size="8.8" fill="#a6a6a6" textLength="53.50" lengthAdjust="spacingAndGlyphs">Face_AnimBP</text>
<path d="M142.6,37.7 l3.1,3 l-3.1,3" fill="none" stroke="#c0c0c0" stroke-width="1.1"/>
<text x="150.50" y="43.87" font-size="8.8" fill="#a6a6a6" textLength="47.50" lengthAdjust="spacingAndGlyphs">Event Graph</text>
</g>
<g id="tabs">
<rect x="0" y="17.4" width="800" height="14.2" fill="#151515"/>
<path d="M0,19.5 H74.4 Q75.8,19.5 75.8,20.9 V31.4 H0 z" fill="#212121"/>
<rect x="0" y="19.5" width="62" height="0.9" fill="url(#gtab)"/>
<g fill="#e0e0e0"><rect x="2.8" y="22.3" width="2.6" height="2.3" rx="0.3"/><rect x="6.9" y="22.6" width="2.2" height="1.8" rx="0.3"/><rect x="3" y="26" width="2.2" height="1.8" rx="0.3"/><rect x="6.9" y="26" width="2.2" height="1.8" rx="0.3"/></g><path d="M5.2,23.4 H7 M5.2,23.6 L7,26.8" stroke="#e0e0e0" stroke-width="0.5"/>
<text x="13.00" y="27.40" font-size="6.1" fill="#d8d8d8" textLength="34.00" lengthAdjust="spacingAndGlyphs">Event Graph</text>
<path d="M66.3,23.9 l2.7,2.7 m0,-2.7 l-2.7,2.7" stroke="#d8d8d8" stroke-width="0.9"/>
<g stroke="#d0d0d0" stroke-width="0.8" fill="none" stroke-linecap="round"><circle cx="85.3" cy="22.4" r="0.8" fill="#d0d0d0" stroke="none"/><path d="M82.3,24.2 l1.8,-0.7 l1.4,0.9 l-1,2 l1.3,1.4 M84.6,26.3 l-1.2,1 l-1.5,0.8 M85.6,24.5 l1.3,0.7"/></g>
<text x="90.00" y="27.40" font-size="6.1" fill="#c4c4c4" textLength="31.75" lengthAdjust="spacingAndGlyphs">AnimGraph</text>
</g>
<g id="toolbar">
<rect x="0" y="0" width="800" height="17.5" fill="#242424"/>
<text x="-1.50" y="10.13" font-size="6.2" fill="#d2d2d2" textLength="28.50" lengthAdjust="spacingAndGlyphs">ate Asset</text>
<path d="M28.9,7.4 l1.8,1.7 l1.8,-1.7" fill="none" stroke="#d0d0d0" stroke-width="0.95"/>
<rect x="39.5" y="0" width="0.8" height="17.5" fill="#1a1a1a"/>
<rect x="115.2" y="0" width="0.8" height="17.5" fill="#1a1a1a"/>
<rect x="157.8" y="0" width="0.8" height="17.5" fill="#1a1a1a"/>
<rect x="267.8" y="0" width="0.8" height="17.5" fill="#1a1a1a"/>
<rect x="399" y="0" width="0.8" height="17.5" fill="#1a1a1a"/>
<g fill="none" stroke="#c0c0c0" stroke-width="0.7"><path d="M47,8.6 l3.3,-1.4 l3.3,1.4 v2 l-3.3,1.5 l-3.3,-1.5 z M47,8.6 l3.3,1.4 l3.3,-1.4"/><path d="M46.6,6.4 q1.2,-2 3.6,-1.6 m-0.9,-0.9 l1,0.9 l-1,0.9"/></g>
<text x="57.00" y="10.13" font-size="6.2" fill="#d2d2d2" textLength="50.50" lengthAdjust="spacingAndGlyphs">Make Static Mesh</text>
<g fill="#cacaca"><rect x="121.4" y="6.2" width="2.7" height="2.5" rx="0.4"/><rect x="127.2" y="3.6" width="3.3" height="3" rx="0.4"/><circle cx="128.8" cy="10.9" r="2.4"/></g><path d="M124,7.4 L127.3,5.4" stroke="#cacaca" stroke-width="0.6"/><path d="M127.6,10.9 l0.9,0.9 l1.5,-1.8" stroke="#242424" stroke-width="0.7" fill="none"/>
<text x="133.75" y="10.13" font-size="6.2" fill="#d2d2d2" textLength="10.00" lengthAdjust="spacingAndGlyphs">Diff</text>
<path d="M145.9,7.4 l1.8,1.7 l1.8,-1.7" fill="none" stroke="#d0d0d0" stroke-width="0.95"/>
<g fill="none" stroke="#cacaca" stroke-width="0.9"><circle cx="172.7" cy="7.5" r="3.1"/><path d="M170.4,9.9 l-3.1,3" stroke-width="1.2" stroke-linecap="round"/><path d="M171.2,7.5 h2.9 m-1,-1 l1,1 l-1,1" stroke-width="0.6"/></g>
<text x="178.00" y="10.13" font-size="6.2" fill="#d2d2d2" textLength="12.00" lengthAdjust="spacingAndGlyphs">Find</text>
<g fill="#cacaca"><rect x="200.3" y="4.3" width="2.6" height="2.3" rx="0.4"/><rect x="206.6" y="4.3" width="2.8" height="2.6" rx="0.4"/></g><path d="M202.8,5.5 H206.8" stroke="#cacaca" stroke-width="0.6"/><ellipse cx="206.2" cy="10.4" rx="2.9" ry="1.9" fill="none" stroke="#cacaca" stroke-width="0.8"/><circle cx="206.2" cy="10.4" r="0.9" fill="#cacaca"/>
<text x="212.00" y="10.13" font-size="6.2" fill="#d2d2d2" textLength="41.75" lengthAdjust="spacingAndGlyphs">Hide Unrelated</text>
<g fill="#c0c0c0"><circle cx="261.9" cy="5.9" r="0.8"/><circle cx="261.9" cy="8.5" r="0.8"/><circle cx="261.9" cy="11.1" r="0.8"/></g>
<g fill="none" stroke="#c0c0c0"><circle cx="281.4" cy="8.1" r="2.3" stroke-width="1.1"/><circle cx="281.4" cy="8.1" r="3.6" stroke-width="1.4" stroke-dasharray="1.3 1.527"/></g>
<text x="288.00" y="10.13" font-size="6.2" fill="#d2d2d2" textLength="40.75" lengthAdjust="spacingAndGlyphs">Class Settings</text>
<g stroke="#cacaca" fill="none"><path d="M341.2,12.2 l0.9,-2.7 l5.2,-5.2 l1.8,1.8 l-5.2,5.2 z" fill="#cacaca" stroke="none"/><path d="M347.2,8.6 H350 M345.6,10.4 H350 M343.8,12.1 H350" stroke-width="0.6"/></g>
<text x="352.00" y="10.13" font-size="6.2" fill="#d2d2d2" textLength="41.00" lengthAdjust="spacingAndGlyphs">Class Defaults</text>
<rect x="408.8" y="1.6" width="67" height="13.2" rx="2" fill="#303030"/><rect x="464.8" y="2.4" width="0.7" height="11.6" fill="#262626"/><rect x="481" y="0" width="0.8" height="17.5" fill="#1c1c1c"/>
<path d="M413.9,4.3 L420.8,8.2 L413.9,12.1 z" fill="#8bc24a" stroke="#8bc24a" stroke-width="0.6" stroke-linejoin="round"/>
<g fill="#7e7e7e"><rect x="426.9" y="4.7" width="1.5" height="6.9"/><path d="M429.4,4.7 L434.8,8.15 L429.4,11.6 z"/><rect x="440.6" y="4.6" width="6.8" height="7" rx="0.5"/><path d="M453.1,9.1 L457.2,4.4 L461.3,9.1 z"/><rect x="453.1" y="10.2" width="8.2" height="1.6"/></g>
<g fill="#c0c0c0"><circle cx="470.8" cy="5.7" r="0.8"/><circle cx="470.8" cy="8.3" r="0.8"/><circle cx="470.8" cy="10.9" r="0.8"/></g>
<rect x="491.2" y="3.4" width="159.6" height="9.4" rx="1.6" fill="#0f0f0f" stroke="#2c2c2c" stroke-width="0.5"/>
<text x="494.50" y="10.40" font-size="6.1" fill="#c4c4c4" textLength="144.25" lengthAdjust="spacingAndGlyphs" class="dd">Face_AnimBP_C_7 in AnimationEditorPreviewActor</text>
<path d="M641.9,7.3 l1.9,1.8 l1.9,-1.8" fill="none" stroke="#d8d8d8" stroke-width="1"/>
</g>
</svg>
</body></html>
